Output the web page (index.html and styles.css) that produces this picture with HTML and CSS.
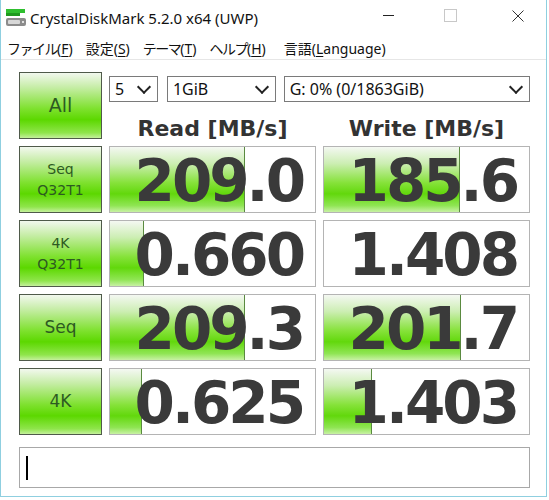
FILE: index.html
```html
<!DOCTYPE html>
<html>
<head>
	<title>CrystalDiskMark 5.2.0 x64 (UWP)</title>
	<link rel="stylesheet" href="styles.css">
</head>
<body>
<div class="window">
	<div class="titlebar">
		<svg class="appicon" width="22" height="20" viewBox="0 0 22 20">
			<rect x="1" y="1" width="19" height="4" fill="#2fbf2f"/>
			<rect x="1" y="5" width="14" height="3" fill="#1e9a1e"/>
			<rect x="1" y="10" width="20" height="8" rx="2" fill="#8c8c8c"/>
			<rect x="3" y="12" width="12" height="4" rx="1" fill="#d8d8d8"/>
			<rect x="17" y="13" width="2" height="2" fill="#e0e0e0"/>
		</svg>
		<span class="title">CrystalDiskMark 5.2.0 x64 (UWP)</span>
		<div class="controls">
			<span class="ctl min"></span>
			<span class="ctl max"></span>
			<svg class="ctl close" width="12" height="12" viewBox="0 0 12 12"><path d="M0.5 0.5 L11.5 11.5 M11.5 0.5 L0.5 11.5" stroke="#333" stroke-width="1"/></svg>
		</div>
	</div>
	<div class="menubar">
		<span class="m1"><b>ファイル</b>(<u>F</u>)</span>
		<span class="m2">設定(<u>S</u>)</span>
		<span class="m3"><b>テーマ</b>(<u>T</u>)</span>
		<span class="m4"><b>ヘルプ</b>(<u>H</u>)</span>
		<span class="m5">言語(<u>L</u>anguage)</span>
	</div>
	<div class="main">
		<div class="btn big">All</div>
		<div class="top">
			<div class="selects">
				<div class="sel s1"><span>5</span><i></i></div>
				<div class="sel s2"><span>1GiB</span><i></i></div>
				<div class="sel s3"><span>G: 0% (0/1863GiB)</span><i></i></div>
			</div>
			<div class="heads">
				<div>Read [MB/s]</div>
				<div>Write [MB/s]</div>
			</div>
		</div>

		<div class="btn"><span>Seq<br>Q32T1</span></div>
		<div class="cell"><div class="bar" style="width:134px"></div><span>209.0</span></div>
		<div class="cell"><div class="bar" style="width:135px"></div><span>185.6</span></div>

		<div class="btn"><span>4K<br>Q32T1</span></div>
		<div class="cell"><div class="bar" style="width:33px"></div><span>0.660</span></div>
		<div class="cell"><span>1.408</span></div>

		<div class="btn mid">Seq</div>
		<div class="cell"><div class="bar" style="width:134px"></div><span>209.3</span></div>
		<div class="cell"><div class="bar" style="width:136px"></div><span>201.7</span></div>

		<div class="btn mid">4K</div>
		<div class="cell"><div class="bar" style="width:31px"></div><span>0.625</span></div>
		<div class="cell"><div class="bar" style="width:47px"></div><span>1.403</span></div>

		<div class="comment"><i></i></div>
	</div>
</div>
</body>
</html>
```

FILE: styles.css
```css
body{
	margin: 0;
	background: #ffffff;
	font-family: "Noto Sans", "Noto Sans CJK JP", sans-serif;
	color: #000;
}
.window{
	width: 547px;
	height: 497px;
	border-left: 1px solid #8fcfe0;
	border-right: 1px solid #8fcfe0;
	border-bottom: 1px solid #8fcfe0;
	box-sizing: border-box;
	background: #fff;
	position: relative;
}
.titlebar{
	height: 37px;
	display: flex;
	align-items: center;
}
.appicon{
	margin-left: 4px;
	margin-right: 3px;
	margin-top: -2px;
}
.title{
	font-size: 15px;
	color: #111;
	margin-top: -2px;
}
.controls{
	margin-left: auto;
	display: flex;
	align-items: center;
	margin-top: -6px;
}
.ctl{
	display: block;
}
.min{
	width: 11px;
	height: 1px;
	background: #222;
	margin-right: 50px;
}
.max{
	width: 11px;
	height: 11px;
	border: 1px solid #c8c8c8;
	margin-right: 55px;
}
.close{
	margin-right: 22px;
}
.menubar{
	height: 22px;
	display: flex;
	align-items: center;
	font-family: "Noto Sans", "Noto Sans CJK JP", sans-serif;
	font-size: 14px;
	color: #111;
	border-bottom: 1px solid #e6e6e6;
	padding-left: 6px;
}
.menubar span{
	margin-right: 13px;
	white-space: nowrap;
}
.menubar b{
	font-weight: normal;
	letter-spacing: -1.5px;
}
.menubar u{
	text-underline-offset: 2px;
}
.m5{
	margin-left: 5px;
}
.main{
	display: grid;
	grid-template-columns: 83px 207px 207px;
	grid-template-rows: repeat(5, 67px);
	column-gap: 7px;
	row-gap: 7px;
	padding: 12px 0 0 18px;
}
.btn{
	box-sizing: border-box;
	border: 1px solid #4f5a4a;
	background: linear-gradient(to bottom, #f2f8ee 0%, #c6eda6 22%, #7ee12e 55%, #5cd800 72%, #8fe54b 92%, #c4f09c 100%);
	color: #2d5a22;
	font-family: "DejaVu Sans", Verdana, sans-serif;
	font-size: 14px;
	line-height: 21px;
	display: flex;
	align-items: center;
	justify-content: center;
	text-align: center;
}
.btn.big{
	font-size: 19px;
}
.btn.mid{
	font-size: 17px;
}
.top{
	grid-column: 2 / 4;
	display: flex;
	flex-direction: column;
}
.selects{
	display: flex;
	margin-top: 4px;
	height: 26px;
}
.sel{
	box-sizing: border-box;
	border: 1px solid #7a7a7a;
	height: 26px;
	display: flex;
	align-items: center;
	padding-left: 5px;
	padding-right: 6px;
	font-family: "Noto Sans", sans-serif;
	font-size: 16px;
	color: #111;
}
.sel span{
	flex: 1;
}
.sel i{
	width: 8px;
	height: 8px;
	border-right: 2px solid #222;
	border-bottom: 2px solid #222;
	transform: rotate(45deg);
	margin-top: -5px;
	margin-right: 2px;
}
.s1{ width: 49px; margin-right: 9px; }
.s2{ width: 109px; margin-right: 8px; }
.s3{ width: 247px; }
.heads{
	display: grid;
	grid-template-columns: 207px 207px;
	column-gap: 7px;
	margin-top: 13px;
	font-family: "DejaVu Sans", Verdana, sans-serif;
	font-weight: bold;
	font-size: 22px;
	line-height: 28px;
	color: #333;
	text-align: center;
}
.cell{
	box-sizing: border-box;
	border: 1px solid #b4b4b4;
	position: relative;
	background: #fff;
	display: flex;
	align-items: center;
	justify-content: flex-end;
	padding-right: 12px;
	overflow: hidden;
}
.bar{
	position: absolute;
	left: 0;
	top: 0;
	bottom: 0;
	background: linear-gradient(to bottom, #f4f8f2 0%, #cdeeb4 25%, #86e23a 55%, #62d80c 72%, #8fe553 90%, #c8f1a4 100%);
	border-right: 1px solid #5a8a40;
}
.cell span{
	position: relative;
	font-family: "DejaVu Sans", Verdana, sans-serif;
	font-weight: bold;
	font-size: 58px;
	letter-spacing: -3px;
	color: #3a3a3a;
	line-height: 1;
	margin-top: 2px;
}
.comment{
	grid-column: 1 / 4;
	align-self: start;
	margin-top: 5px;
	height: 41px;
	box-sizing: border-box;
	border: 1px solid #a8a8a8;
	display: flex;
	align-items: center;
	padding-left: 6px;
}
.comment i{
	width: 2px;
	height: 24px;
	background: #000;
}
```
